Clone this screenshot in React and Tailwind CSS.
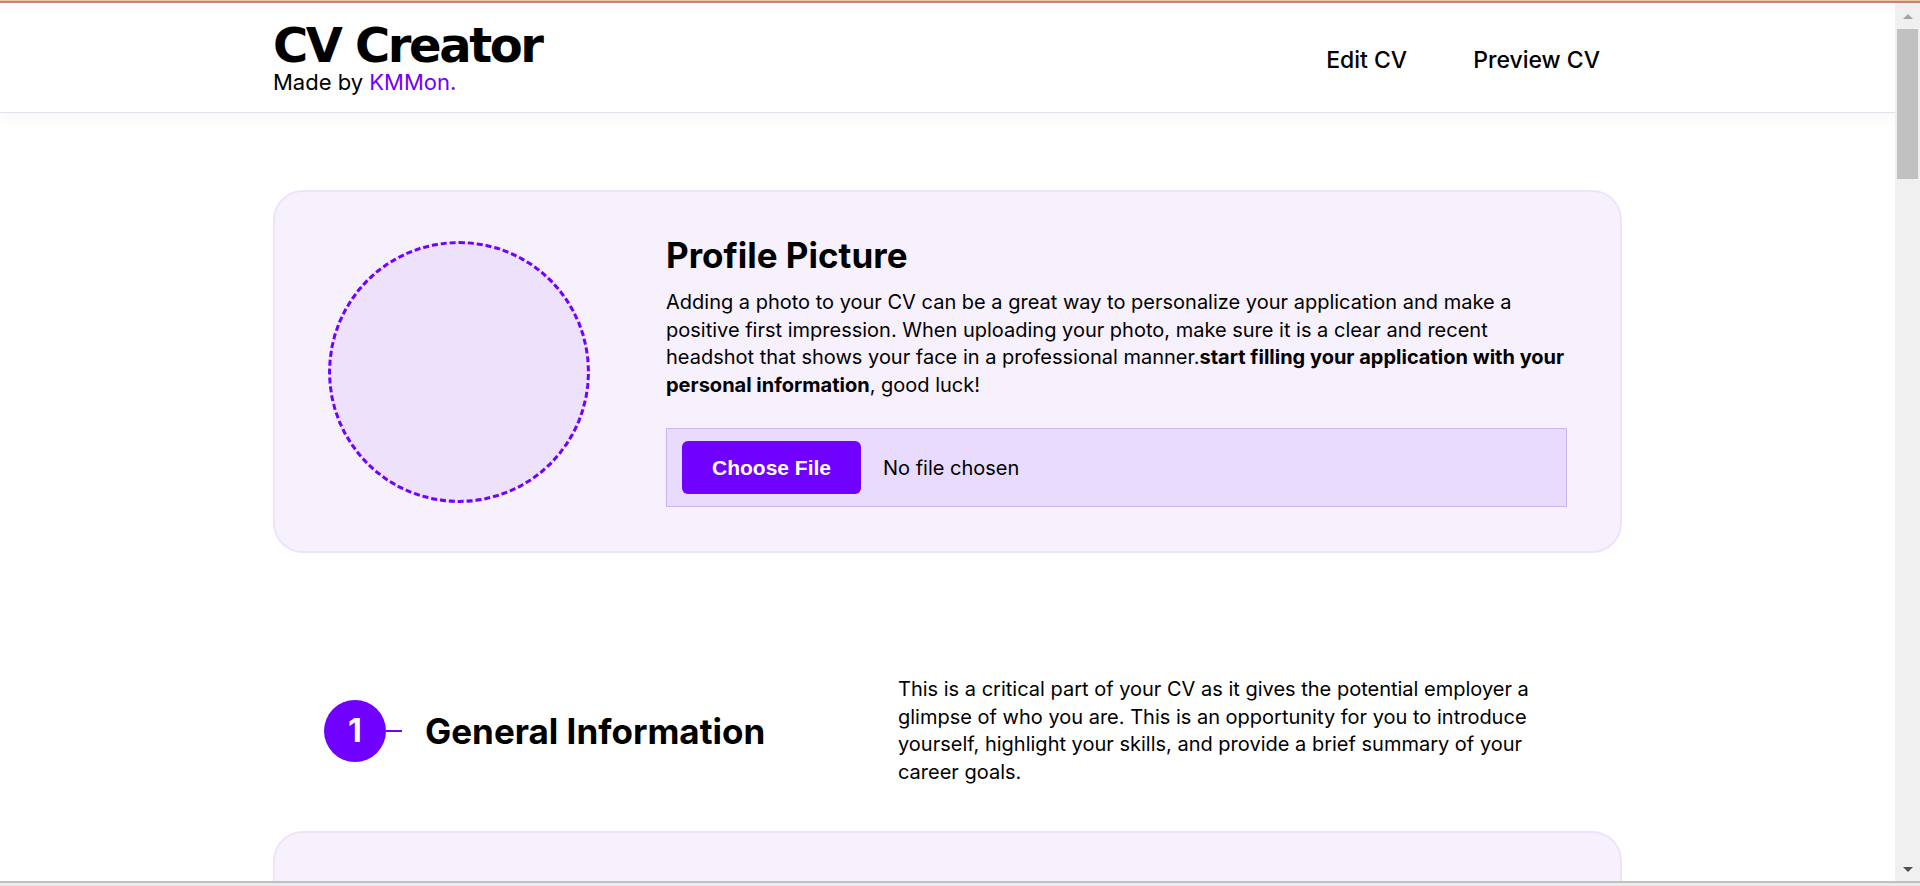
export default function App() {
  return (
    <div className="h-[886px] w-full overflow-hidden flex flex-col bg-white text-black font-['Inter','Noto_Sans',sans-serif]">
      <div className="h-[3px] shrink-0 border-t border-[#ebc5ae] bg-[#c4876b]" />
      <div className="flex flex-1 min-h-0">
        <main className="flex-1 min-w-0 overflow-hidden">
          <header className="bg-white border-b border-[#dfe3ea] shadow-[0_6px_16px_rgba(0,0,0,0.035)]">
            <div className="max-w-[1349px] mx-auto flex items-center justify-between pt-[18px] pb-[17px]">
              <div>
                <h1 className="font-['DejaVu_Sans',sans-serif] font-bold text-[48px] leading-[48px] tracking-[-2.4px]">CV Creator</h1>
                <p className="text-[22px] leading-[26px]">
                  Made by <span className="text-[#7000ff]">KMMon.</span>
                </p>
              </div>
              <nav className="mt-[5px] flex items-center gap-[66px] mr-[22px] text-[23px] font-medium">
                <a className="cursor-pointer">Edit CV</a>
                <a className="cursor-pointer">Preview CV</a>
              </nav>
            </div>
          </header>

          <div className="max-w-[1349px] mx-auto">
            <section className="mt-[77px] rounded-[30px] border-2 border-[#eee3fd] bg-[#f7f1fe] flex items-center px-[53px] py-[44px]">
              <div className="w-[262px] h-[262px] shrink-0 rounded-full border-[3px] border-dashed border-[#7000ff] bg-[#ede1fc]" />
              <div className="ml-[76px] flex-1 min-w-0">
                <h2 className="text-[35px] leading-[38px] font-bold">Profile Picture</h2>
                <p className="mt-[15px] text-[20px] leading-[27.5px]">
                  Adding a photo to your CV can be a great way to personalize your application and make a positive first impression. When uploading your photo, make sure it is a clear and recent headshot that shows your face in a professional manner.<span className="font-bold">start filling your application with your personal information</span>, good luck!
                </p>
                <div className="mt-[29px] border border-[#cbb5f6] bg-[#e9dbfd] px-[15px] py-[12px] flex items-center">
                  <button className="h-[53px] w-[179px] rounded-[6px] bg-[#7000ff] text-white font-bold text-[21px] font-['Liberation_Sans',Arial,sans-serif]">
                    Choose File
                  </button>
                  <span className="ml-[22px] text-[20px]">No file chosen</span>
                </div>
              </div>
            </section>

            <section className="mt-[123px] flex items-center pl-[51px]">
              <div className="w-[574px] shrink-0 flex items-center">
                <div className="w-[62px] h-[62px] rounded-full bg-[#7000ff] text-white text-[32px] font-bold flex items-center justify-center">1</div>
                <div className="w-[16px] h-[2px] bg-[#7000ff]" />
                <h2 className="ml-[23px] text-[35px] font-bold leading-[44px]">General Information</h2>
              </div>
              <p className="w-[650px] text-[20px] leading-[27.5px]">
                This is a critical part of your CV as it gives the potential employer a glimpse of who you are. This is an opportunity for you to introduce yourself, highlight your skills, and provide a brief summary of your career goals.
              </p>
            </section>

            <section className="mt-[45px] h-[300px] rounded-[30px] border-2 border-[#eee3fd] bg-[#f7f1fe]" />
          </div>
        </main>
        <aside className="w-[25px] shrink-0 bg-[#f0f0f0] flex flex-col items-center">
          <div className="mt-[11px] w-0 h-0 border-x-[5px] border-x-transparent border-b-[5px] border-b-[#a3a3a3]" />
          <div className="mt-[10px] w-[21px] h-[150px] bg-[#c1c1c1]" />
          <div className="flex-1" />
          <div className="mb-[9px] w-0 h-0 border-x-[5px] border-x-transparent border-t-[5px] border-t-[#505050]" />
        </aside>
      </div>
      <div className="h-[5px] shrink-0 border-t-2 border-[#c0c0c0] bg-[#ebebeb]" />
    </div>
  );
}
